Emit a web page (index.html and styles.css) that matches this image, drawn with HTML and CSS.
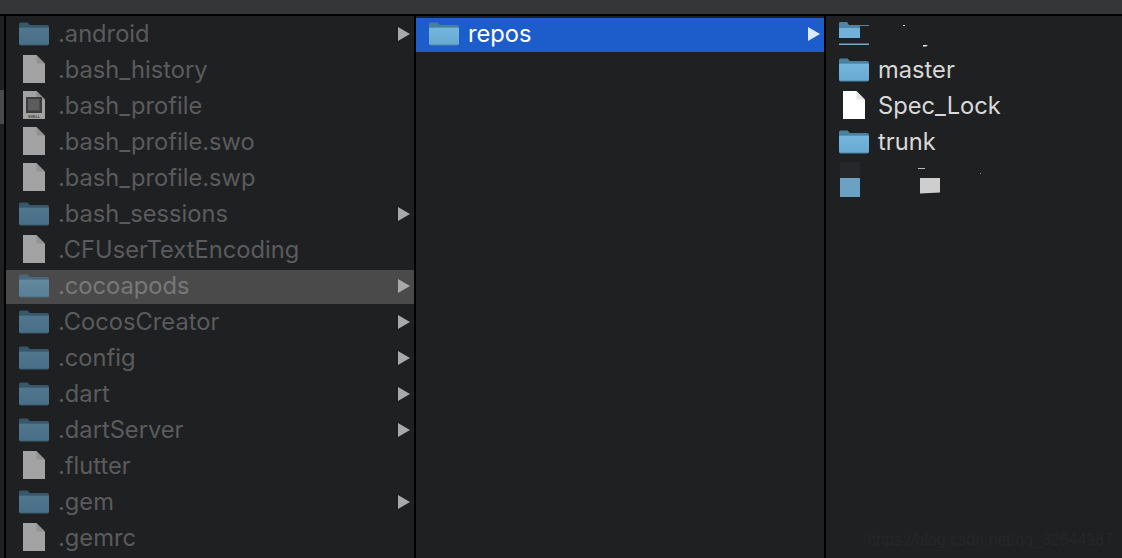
FILE: index.html
```html
<!DOCTYPE html>
<html lang="en">
<head>
<meta charset="utf-8">
<title>Finder</title>
<link rel="stylesheet" href="styles.css">
</head>
<body>
<svg class="defs" width="0" height="0" aria-hidden="true">
  <defs>
    <linearGradient id="fg" x1="0" y1="0" x2="0" y2="1"><stop offset="0" stop-color="#74b6dc"/><stop offset="1" stop-color="#67a9d1"/></linearGradient>
    <symbol id="folder" viewBox="0 0 30 24">
      <path d="M0 2.500C0 1 .7 .5 2 .5H8.500L11 3H28C29.300 3 30 3.700 30 5V10H0Z" fill="#4a7f9f"/>
      <rect y="5" width="30" height="18.500" rx="1.800" fill="#4f87a8"/>
      <path d="M0 7C0 6.300.5 5.800 1.200 5.800H28.800C29.500 5.800 30 6.300 30 7V21C30 21.800 29.500 22.500 28.800 22.500H1.200C.5 22.500 0 21.800 0 21Z" fill="url(#fg)"/>
    </symbol>
    <symbol id="file" viewBox="0 0 22 28">
      <path d="M0 0H13.500L22 8.500V28H0Z" fill="currentColor"/>
      <path d="M13.500 0L22 8.500H13.500Z" fill="#000" opacity=".1"/>
    </symbol>
  </defs>
</svg>
<div class="window">
  <div class="toolbar"></div>
  <div class="browser">
    <div class="strip"><div class="strip-mark"></div></div>
    <div class="column col-wide col-dim">
      <div class="row"><svg class="ico-folder"><use href="#folder"/></svg><span class="name">.android</span><span class="arrow"></span></div>
      <div class="row"><svg class="ico-file"><use href="#file"/></svg><span class="name">.bash_history</span></div>
      <div class="row">
        <svg class="ico-file" viewBox="0 0 22 28">
          <path d="M0 0H13.500L22 8.500V28H0Z" fill="#a3a3a3"/>
          <path d="M13.500 0L22 8.500H13.500Z" fill="#8c8c8c"/>
          <rect x="3" y="6" width="16" height="16" fill="#3c3c3c"/>
          <rect x="5" y="8" width="11.500" height="11.500" fill="#5c5c5c"/>
          <text class="shell-label" x="11" y="26.700">SHELL</text>
        </svg>
        <span class="name">.bash_profile</span>
      </div>
      <div class="row"><svg class="ico-file"><use href="#file"/></svg><span class="name">.bash_profile.swo</span></div>
      <div class="row"><svg class="ico-file"><use href="#file"/></svg><span class="name">.bash_profile.swp</span></div>
      <div class="row"><svg class="ico-folder"><use href="#folder"/></svg><span class="name">.bash_sessions</span><span class="arrow"></span></div>
      <div class="row"><svg class="ico-file"><use href="#file"/></svg><span class="name">.CFUserTextEncoding</span></div>
      <div class="row row-inactive"><svg class="ico-folder"><use href="#folder"/></svg><span class="name">.cocoapods</span><span class="arrow"></span></div>
      <div class="row"><svg class="ico-folder"><use href="#folder"/></svg><span class="name">.CocosCreator</span><span class="arrow"></span></div>
      <div class="row"><svg class="ico-folder"><use href="#folder"/></svg><span class="name">.config</span><span class="arrow"></span></div>
      <div class="row"><svg class="ico-folder"><use href="#folder"/></svg><span class="name">.dart</span><span class="arrow"></span></div>
      <div class="row"><svg class="ico-folder"><use href="#folder"/></svg><span class="name">.dartServer</span><span class="arrow"></span></div>
      <div class="row"><svg class="ico-file"><use href="#file"/></svg><span class="name">.flutter</span></div>
      <div class="row"><svg class="ico-folder"><use href="#folder"/></svg><span class="name">.gem</span><span class="arrow"></span></div>
      <div class="row"><svg class="ico-file"><use href="#file"/></svg><span class="name">.gemrc</span></div>
    </div>
    <div class="column col-wide">
      <div class="row row-active"><svg class="ico-folder"><use href="#folder"/></svg><span class="name">repos</span><span class="arrow"></span></div>
    </div>
    <div class="column col-last">
      <div class="row row-redacted">
        <svg class="redact" width="110" height="34" viewBox="0 0 110 34">
          <path d="M0 5.500C0 4.500 .6 4 1.500 4H8L10 7H30V8H21V20H3C1 20 0 19.500 0 18Z" fill="#4f85a6"/>
          <rect y="10" width="21" height="10" fill="#6fb1d9"/>
          <rect y="25.500" width="30" height="1.500" fill="#6fa9cc"/>
          <rect x="64" y="7" width="2" height="1" fill="#ddd"/>
          <path d="M84 27H89L87 28.500H84Z" fill="#eee"/>
        </svg>
      </div>
      <div class="row"><svg class="ico-folder"><use href="#folder"/></svg><span class="name">master</span></div>
      <div class="row row-white"><svg class="ico-file"><use href="#file"/></svg><span class="name">Spec_Lock</span></div>
      <div class="row"><svg class="ico-folder"><use href="#folder"/></svg><span class="name">trunk</span></div>
      <div class="row row-redacted">
        <svg class="redact" width="110" height="34" viewBox="0 0 110 34">
          <rect x="1" y="0" width="20" height="16" fill="#26272b"/>
          <rect x="1" y="16" width="20" height="19" fill="#6ba2c3"/>
          <path d="M81 16H101V30.500L81 31.500Z" fill="#cdcecd"/>
          <rect x="79" y="6" width="7" height="1" fill="#bbb"/>
          <rect x="141" y="11" width="1" height="1" fill="#888"/>
        </svg>
      </div>
    </div>
  </div>
  <div class="watermark">https://blog.csdn.net/qq_32644987</div>
</div>
</body>
</html>
```
FILE: styles.css
```css
* { box-sizing: border-box; }
html, body { margin: 0; padding: 0; background: #1f2022; }
.defs { position: absolute; }
.window { position: relative; width: 1122px; height: 558px; overflow: hidden; display: flex; flex-direction: column; background: #000; }
.toolbar { height: 14px; flex: none; background: #353638; }
.browser { flex: 1; min-height: 0; margin-top: 2px; display: flex; gap: 2px; font-family: Inter, "Liberation Sans", sans-serif; font-size: 23.7px; }
.strip { width: 4px; flex: none; background: #1f2022; padding-top: 74px; }
.strip-mark { height: 34px; background: #4a4a4a; }
.column { flex: none; background: #1f2022; padding-top: 2px; overflow: hidden; display: flex; flex-direction: column; gap: 2px; }
.col-wide { width: 408px; }
.col-last { flex: 1; }
.row { flex: none; height: 34px; display: flex; align-items: center; padding-left: 13px; padding-right: 4px; color: #d8d8d8; }
.ico-folder { width: 30px; height: 24px; margin-bottom: 2px; flex: none; }
.ico-file { width: 22px; height: 28px; margin: 0 4px 4px; flex: none; color: #fff; }
.name { margin: 0 0 4px 9px; flex: 1; white-space: nowrap; }
.arrow { flex: none; width: 12px; height: 14px; margin-bottom: 2px; background: #a9a9a9; clip-path: polygon(0 0, 100% 50%, 0 100%); }
.shell-label { font-family: "Liberation Sans", sans-serif; font-size: 3.6px; font-weight: 700; text-anchor: middle; fill: #444; }
.col-dim .row { color: #5a5b5c; }
.col-dim .ico-folder { opacity: .58; }
.col-dim .ico-file { color: #a3a3a3; }
.row-inactive { background: #4a4a4a; }
.col-dim .row-inactive { color: #787878; }
.row-active { background: #1c5ccb; color: #fff; }
.row-active .arrow { background: #dfe7fa; }
.redact { flex: none; overflow: visible; }
.watermark { position: absolute; right: 9px; bottom: 9px; font-family: "Liberation Sans", sans-serif; font-size: 16px; color: #252628; }
```
